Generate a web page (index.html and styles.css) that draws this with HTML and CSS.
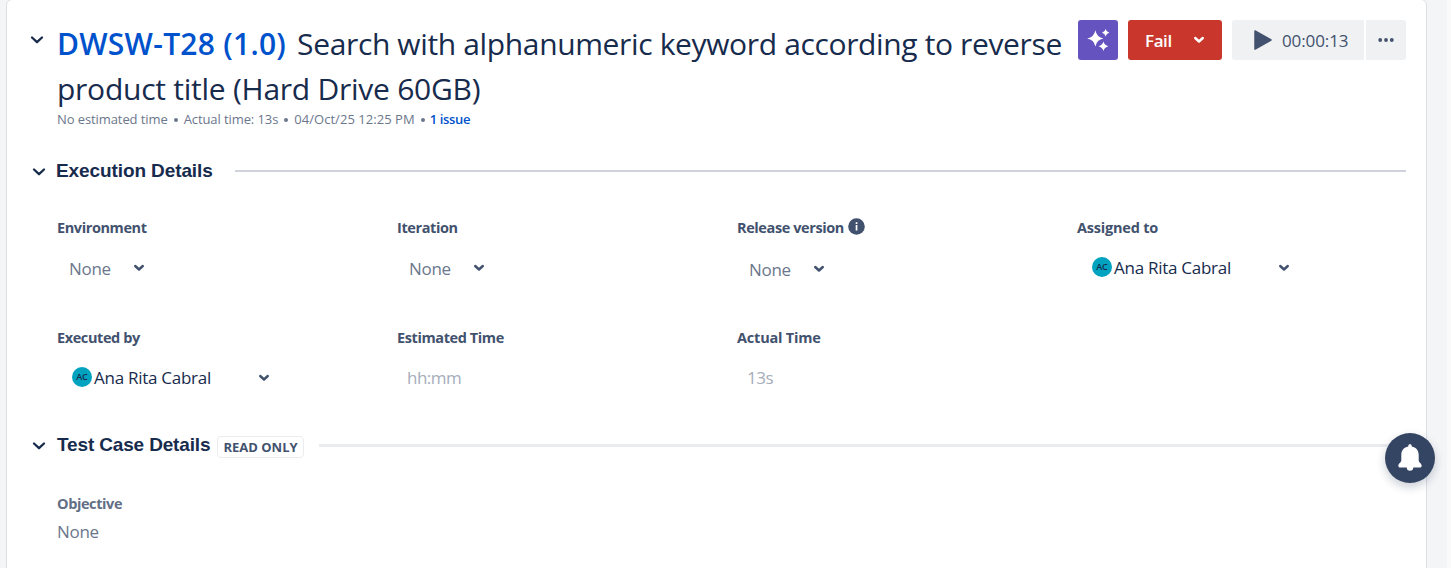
FILE: index.html
```
<!DOCTYPE html>
<html lang="en">
<head>
<meta charset="utf-8">
<title>Test execution</title>
<link rel="stylesheet" href="styles.css">
</head>
<body>
<main class="panel">
  <header class="header">
    <svg class="chevron header-chevron" width="14" height="10" viewBox="0 0 14 10"><path d="M2 2.500 L7 7.200 L12 2.500"/></svg>
    <div class="heading">
      <h1 class="title"><span class="title-line"><a class="key">DWSW-T28 (1.0)</a><span class="name-a">Search with alphanumeric keyword according to reverse</span></span><span class="title-line name-b">product title (Hard Drive 60GB)</span></h1>
      <div class="meta"><span class="m1">No estimated time</span><i class="dot"></i><span class="m1">Actual time: 13s</span><i class="dot"></i><span class="m3">04/Oct/25 12:25 PM</span><i class="dot"></i><a class="issue">1 issue</a></div>
    </div>
    <div class="actions">
      <button class="btn ai"><svg width="40" height="40" viewBox="0 0 40 40" fill="#fff"><path d="M17.400 10.200 Q18.800 17.300 25.400 18.500 Q18.800 19.700 17.400 26.500 Q16 19.700 9.200 18.500 Q16 17.300 17.400 10.200Z"/><path d="M27.600 9 Q28.300 12 31.300 12.800 Q28.300 13.600 27.600 16.400 Q26.900 13.600 24 12.800 Q26.900 12 27.600 9Z"/><path d="M25.400 21.500 Q26.400 25.300 30.400 26.300 Q26.400 27.300 25.400 31 Q24.400 27.300 20.600 26.300 Q24.400 25.300 25.400 21.500Z"/></svg></button>
      <button class="btn fail"><span class="fail-text">Fail</span><svg class="chevron small white" width="12" height="8" viewBox="0 0 12 8"><path d="M2.200 2 L6 5.500 L9.800 2"/></svg></button>
      <div class="timer-group">
        <button class="btn timer"><svg width="20" height="20" viewBox="0 0 20 20"><path d="M3 0.900 L19 10 L3 19.100Z" fill="#42526e" stroke="#42526e" stroke-width="1.500" stroke-linejoin="round"/></svg><span class="time">00:00:13</span></button>
        <button class="btn more"><svg width="16" height="4" viewBox="0 0 16 4" fill="#42526e"><circle cx="2.200" cy="2" r="1.900"/><circle cx="8" cy="2" r="1.900"/><circle cx="13.800" cy="2" r="1.900"/></svg></button>
      </div>
    </div>
  </header>

  <section class="section execution">
    <div class="section-head">
      <svg class="chevron" width="14" height="10" viewBox="0 0 14 10"><path d="M2 2.500 L7 7.200 L12 2.500"/></svg>
      <h2 class="section-title">Execution Details</h2>
      <div class="rule"></div>
    </div>
    <div class="fields">
      <div class="field"><label class="label">Environment</label>
        <div class="value select"><span class="none">None</span><svg class="chevron small" width="12" height="8" viewBox="0 0 12 8"><path d="M2.200 2 L6 5.500 L9.800 2"/></svg></div></div>
      <div class="field"><label class="label">Iteration</label>
        <div class="value select"><span class="none">None</span><svg class="chevron small" width="12" height="8" viewBox="0 0 12 8"><path d="M2.200 2 L6 5.500 L9.800 2"/></svg></div></div>
      <div class="field"><label class="label"><span class="release">Release version</span><svg class="info" width="17" height="17" viewBox="0 0 17 17"><circle cx="8.500" cy="8.500" r="8.300" fill="#42526e"/><path d="M7.700 7h1.700v5.500H7.700zM7.700 4.200h1.700v1.700H7.700z" fill="#fff"/></svg></label>
        <div class="value select lower"><span class="none">None</span><svg class="chevron small" width="12" height="8" viewBox="0 0 12 8"><path d="M2.200 2 L6 5.500 L9.800 2"/></svg></div></div>
      <div class="field"><label class="label wide">Assigned to</label>
        <div class="value user"><span class="avatar">AC</span><span class="user-name">Ana Rita Cabral</span><svg class="chevron small" width="12" height="8" viewBox="0 0 12 8"><path d="M2.200 2 L6 5.500 L9.800 2"/></svg></div></div>
      <div class="field"><label class="label">Executed by</label>
        <div class="value user"><span class="avatar">AC</span><span class="user-name">Ana Rita Cabral</span><svg class="chevron small" width="12" height="8" viewBox="0 0 12 8"><path d="M2.200 2 L6 5.500 L9.800 2"/></svg></div></div>
      <div class="field"><label class="label">Estimated Time</label><div class="value placeholder">hh:mm</div></div>
      <div class="field"><label class="label wide">Actual Time</label><div class="value placeholder">13s</div></div>
    </div>
  </section>

  <section class="section case">
    <div class="section-head">
      <svg class="chevron" width="14" height="10" viewBox="0 0 14 10"><path d="M2 2.500 L7 7.200 L12 2.500"/></svg>
      <h2 class="section-title">Test Case Details</h2>
      <span class="badge">READ ONLY</span>
      <div class="rule"></div>
    </div>
    <div class="objective">
      <div class="label">Objective</div>
      <div class="none">None</div>
    </div>
  </section>
</main>
<div class="scroll-track"></div>
<button class="bell"><svg width="50" height="50" viewBox="0 0 50 50" fill="#fff"><path d="M25 11.200c1 0 1.700.7 1.700 1.700v.6c4.300.8 7 4 7 8.400v5.300c0 2.300 3 3.200 3 5.500 0 1.100-.8 1.800-2 1.800H15.300c-1.200 0-2-.7-2-1.800 0-2.300 3-3.200 3-5.500v-5.300c0-4.400 2.700-7.600 7-8.400v-.6c0-1 .7-1.700 1.700-1.700z"/><circle cx="25" cy="34.500" r="3.200"/></svg></button>
</body>
</html>
```
FILE: styles.css
```
* { box-sizing: border-box; }
body {
  margin: 0;
  height: 568px;
  overflow: hidden;
  background: #f4f5f7;
  font-family: "Open Sans", "Noto Sans", sans-serif;
  color: #172b4d;
  display: flex;
}
.panel {
  flex: none;
  width: 1421px;
  height: 580px;
  margin: -1px 0 0 6px;
  background: #fff;
  border: 1px solid #dcdfe6;
  border-radius: 6px;
}
.scroll-track { flex: none; width: 4px; height: 568px; margin-left: 20px; background: #fafafa; }
button { border: 0; padding: 0; font: inherit; }
svg { display: block; flex: none; }
.chevron { fill: none; stroke: #172b4d; stroke-width: 2.3; stroke-linecap: round; stroke-linejoin: round; }
.chevron.small { stroke: #42526e; stroke-width: 2.4; }
.chevron.white { stroke: #fff; }

.header { display: flex; align-items: flex-start; padding: 20px 20px 0 22px; height: 151px; }
.header-chevron { margin: 15px 13px 0 1px; }
.heading { width: 1021px; margin-right: 1px; white-space: nowrap; }
.title { margin: 1px 0 0; font-size: 30px; line-height: 45px; font-weight: 400; }
.title-line { display: block; }
.key { color: #0052cc; font-weight: 600; letter-spacing: 0.26px; margin-right: 11px; }
.name-a { letter-spacing: -0.36px; }
.name-b { letter-spacing: -0.25px; }
.meta { display: flex; align-items: center; font-size: 13px; line-height: 18px; margin-top: -1px; color: #6b778c; }
.m1 { letter-spacing: -0.09px; }
.m3 { letter-spacing: 0.04px; }
.dot { width: 4px; height: 4px; border-radius: 50%; background: #6b778c; margin: 1px 6px 0; }
.issue { color: #0052cc; font-weight: 600; letter-spacing: -0.35px; margin-left: -1px; }

.actions { display: flex; gap: 10px; }
.btn { height: 40px; border-radius: 3px; display: flex; align-items: center; }
.ai { width: 40px; background: #6554c0; }
.fail { width: 94px; background: #c9372c; color: #fff; font-size: 17px; font-weight: 600; padding-left: 17px; }
.fail-text { width: 48px; text-align: left; letter-spacing: -0.4px; }
.timer-group { display: flex; gap: 2px; }
.timer { width: 132px; background: #f0f1f3; color: #42526e; font-size: 17px; padding-left: 20px; border-radius: 3px 0 0 3px; font-weight: 500; }
.time { margin-left: 10px; letter-spacing: -0.1px; }
.more { width: 40px; background: #f0f1f3; justify-content: center; border-radius: 0 3px 3px 0; }

.section { padding: 0 20px 0 25px; }
.section-head { display: flex; align-items: center; height: 40px; }
.section-head .chevron { margin-top: 1px; }
.section-title { margin: 0 0 0 10px; font: 700 19px/24px "Liberation Sans", Arial, sans-serif; letter-spacing: -0.1px; white-space: nowrap; }
.execution .section-title { width: 156px; }
.case .section-title { width: 153px; margin-left: 11px; letter-spacing: -0.15px; }
.rule { flex: 1; height: 2px; background: #cfd2da; margin-left: 23px; }
.case .rule { height: 3px; background: #ebecf0; margin-left: 15px; }

.fields { display: grid; grid-template-columns: repeat(4, 340px); grid-template-rows: 110px 88px; margin: 26px 0 0 25px; width: 1360px; }
.label { display: flex; height: 22px; line-height: 22px; font-size: 14.5px; font-weight: 700; letter-spacing: -0.4px; color: #42526e; white-space: nowrap; }
.label.wide { letter-spacing: -0.2px; }
.release { width: 107px; }
.info { margin: 1px 0 0 4px; }
.value { display: flex; align-items: center; height: 24px; margin-top: 16px; font-size: 17px; letter-spacing: -0.27px; white-space: nowrap; }
.none { font-size: 17px; letter-spacing: -0.3px; color: #6b778c; }
.select { padding-left: 12px; margin-top: 17px; }
.select .none { width: 64px; }
.select.lower { margin-top: 18px; }
.user { padding-left: 15px; }
.avatar { flex: none; width: 20px; height: 20px; border-radius: 50%; background: #00a3bf; font-size: 9px; line-height: 20px; text-align: center; font-weight: 600; letter-spacing: 0; }
.user-name { width: 164px; margin-left: 2px; }
.user .chevron { margin-top: 1px; }
.placeholder { padding-left: 10px; letter-spacing: -0.5px; color: #a5adba; }
.case { margin-top: 10px; }
.badge { width: 87px; height: 22px; margin: 4px 0 0 7px; border: 1px solid #ebecf0; border-radius: 4px; font-size: 13px; line-height: 20px; font-weight: 700; color: #42526e; text-align: center; white-space: nowrap; }
.objective { margin: 28px 0 0 25px; }
.objective .label { color: #626f86; }
.objective .none { line-height: 24px; margin-top: 5px; }

.bell { position: absolute; left: 1385px; top: 433px; width: 50px; height: 50px; border-radius: 50%; background: #344563; box-shadow: 0 4px 10px rgba(9, 30, 66, 0.22); }
```
